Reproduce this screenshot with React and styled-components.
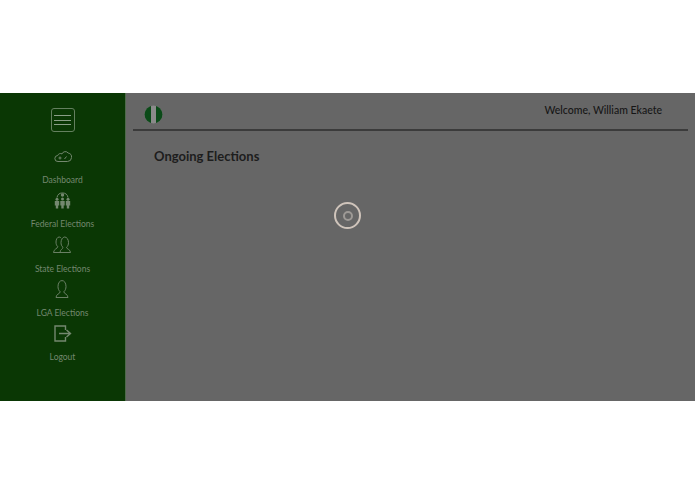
import React from "react";
import styled, { createGlobalStyle } from "styled-components";

const GlobalStyle = createGlobalStyle`
  html, body {
    margin: 0;
    padding: 0;
    background: #ffffff;
  }
  body {
    font-family: "Lato", "DejaVu Sans", sans-serif;
  }
`;

const Page = styled.div`
  width: 695px;
  height: 494px;
  padding-top: 93px;
  box-sizing: border-box;
  overflow: hidden;
`;

const Shell = styled.div`
  position: relative;
  display: flex;
  height: 308px;
  background: #666666;
`;

const Sidebar = styled.aside`
  width: 126px;
  flex-shrink: 0;
  display: flex;
  flex-direction: column;
  align-items: center;
  padding-top: 15px;
  box-sizing: border-box;
  background: #0a3704;
  border-right: 1px solid #4d6a4a;
`;

const MenuButton = styled.div`
  width: 24px;
  height: 24px;
  box-sizing: border-box;
  display: flex;
  flex-direction: column;
  align-items: center;
  justify-content: center;
  gap: 3.5px;
  border: 1px solid #64805f;
  border-radius: 3px;
  margin-bottom: 12px;
`;

const MenuLine = styled.span`
  width: 17px;
  height: 1px;
  background: #8a9e87;
`;

const NavItem = styled.div`
  height: 44.3px;
  display: flex;
  flex-direction: column;
  align-items: center;
  color: #74886f;
`;

const NavIcon = styled.div`
  height: 24px;
  box-sizing: border-box;
  display: flex;
  align-items: center;
  justify-content: center;
  padding-top: ${(props) => props.$drop || 0}px;
`;

const NavLabel = styled.div`
  margin-top: 6px;
  font-size: 8.5px;
  line-height: 13px;
  white-space: nowrap;
`;

const Main = styled.main`
  flex: 1;
  min-width: 0;
  padding: 0 7px;
`;

const TopBar = styled.header`
  height: 26px;
  display: flex;
  align-items: flex-start;
  justify-content: space-between;
  border-bottom: 2px solid #3b3b3b;
  padding: 10px 26px 0 11px;
`;

const FlagSlot = styled.div`
  margin-top: 2px;
  height: 19px;
`;

const Welcome = styled.div`
  font-size: 10.5px;
  line-height: 14px;
  color: #161616;
  font-weight: 500;
`;

const Heading = styled.h1`
  margin: 17px 0 0 21px;
  font-size: 13px;
  line-height: 17px;
  font-weight: 700;
  color: #1d1d1d;
`;

const Spinner = styled.div`
  position: absolute;
  left: 334px;
  top: 109px;
  width: 27px;
  height: 27px;
  box-sizing: border-box;
  display: flex;
  align-items: center;
  justify-content: center;
  border: 2px solid #cfc4bb;
  border-radius: 50%;
`;

const SpinnerDot = styled.div`
  width: 10px;
  height: 10px;
  box-sizing: border-box;
  border: 2px solid #9e9a96;
  border-radius: 50%;
`;

const CloudIcon = () => (
  <svg width="18" height="12" viewBox="0 0 18 12" fill="none" stroke="currentColor" strokeWidth="1">
    <path d="M4 10.500a3 3 0 0 1-.3-6 3 3 0 0 1 4.300-1.600A3.600 3.600 0 0 1 14.200 2 4.300 4.300 0 0 1 13.500 10.500z" />
    <circle cx="6" cy="7" r="1" />
    <path d="M10.500 8l2-2.500" />
  </svg>
);

const PeopleIcon = () => (
  <svg width="17" height="17" viewBox="0 0 17 17" fill="currentColor">
    <path d="M3 5.500a5.600 5.600 0 0 1 11 0" fill="none" stroke="currentColor" strokeWidth="1" />
    <circle cx="8.500" cy="3" r="1.700" />
    <circle cx="3" cy="7.200" r="1.500" />
    <circle cx="8.500" cy="7" r="1.500" />
    <circle cx="14" cy="7.200" r="1.500" />
    <path d="M.8 9h4.400v4.500h-1v3H1.800v-3h-1zM6.300 9h4.400v4.500h-1v3H7.300v-3h-1zM11.800 9h4.400v4.500h-1v3h-2.400v-3h-1z" />
  </svg>
);

const UsersIcon = () => (
  <svg width="18" height="17" viewBox="0 0 18 17" fill="none" stroke="currentColor" strokeWidth="0.9">
    <path d="M7 16.500h10.500c0-3-4-3.500-4-5.200 1.400-1 2-2.700 2-4.800 0-3-1.700-5.500-3.800-5.500S8 4 8 6.500c0 2.100.6 3.800 2 4.800 0 1.700-3 2.200-3 5.200z" />
    <path d="M8.200 2.200C7.700 1.500 7 1 6.200 1 4.200 1 3 3.500 3 6c0 2 .6 3.700 1.800 4.700 0 1.700-4.300 2.500-4.300 5.800H7" />
  </svg>
);

const UserIcon = () => (
  <svg width="14" height="18" viewBox="0 0 14 18" fill="none" stroke="currentColor" strokeWidth="0.9">
    <path d="M1 17.500h12c0-3.500-4-3.500-4.200-5.700 1.500-1.300 2.200-3.200 2.200-5.300C11 3 9.300.6 7 .6S3 3 3 6.500c0 2.100.7 4 2.200 5.300C5 14 1 14 1 17.500z" />
  </svg>
);

const LogoutIcon = () => (
  <svg width="18" height="17" viewBox="0 0 18 17" fill="none" stroke="currentColor" strokeWidth="1.400">
    <path d="M11.500 5V1H1v15h10.500v-4" />
    <path d="M5 8.500h11M12.500 5l4 3.500-4 3.500" />
  </svg>
);

const FlagIcon = () => (
  <svg width="19" height="19" viewBox="0 0 19 19">
    <defs>
      <clipPath id="flag-clip">
        <circle cx="9.500" cy="9.500" r="9" />
      </clipPath>
    </defs>
    <g clipPath="url(#flag-clip)">
      <rect width="19" height="19" fill="#8a8a8a" />
      <rect width="7" height="19" fill="#0b4a18" />
      <rect x="12" width="7" height="19" fill="#0b4a18" />
    </g>
  </svg>
);

const items = [
  { label: "Dashboard", icon: <CloudIcon />, drop: 2 },
  { label: "Federal Elections", icon: <PeopleIcon /> },
  { label: "State Elections", icon: <UsersIcon /> },
  { label: "LGA Elections", icon: <UserIcon /> },
  { label: "Logout", icon: <LogoutIcon /> },
];

const App = () => {
  return (
    <Page>
      <GlobalStyle />
      <Shell>
        <Sidebar>
          <MenuButton>
            <MenuLine />
            <MenuLine />
            <MenuLine />
          </MenuButton>
          {items.map((item) => (
            <NavItem key={item.label}>
              <NavIcon $drop={item.drop}>{item.icon}</NavIcon>
              <NavLabel>{item.label}</NavLabel>
            </NavItem>
          ))}
        </Sidebar>
        <Main>
          <TopBar>
            <FlagSlot>
              <FlagIcon />
            </FlagSlot>
            <Welcome>Welcome, William Ekaete</Welcome>
          </TopBar>
          <Heading>Ongoing Elections</Heading>
        </Main>
        <Spinner>
          <SpinnerDot />
        </Spinner>
      </Shell>
    </Page>
  );
};

export default App;
